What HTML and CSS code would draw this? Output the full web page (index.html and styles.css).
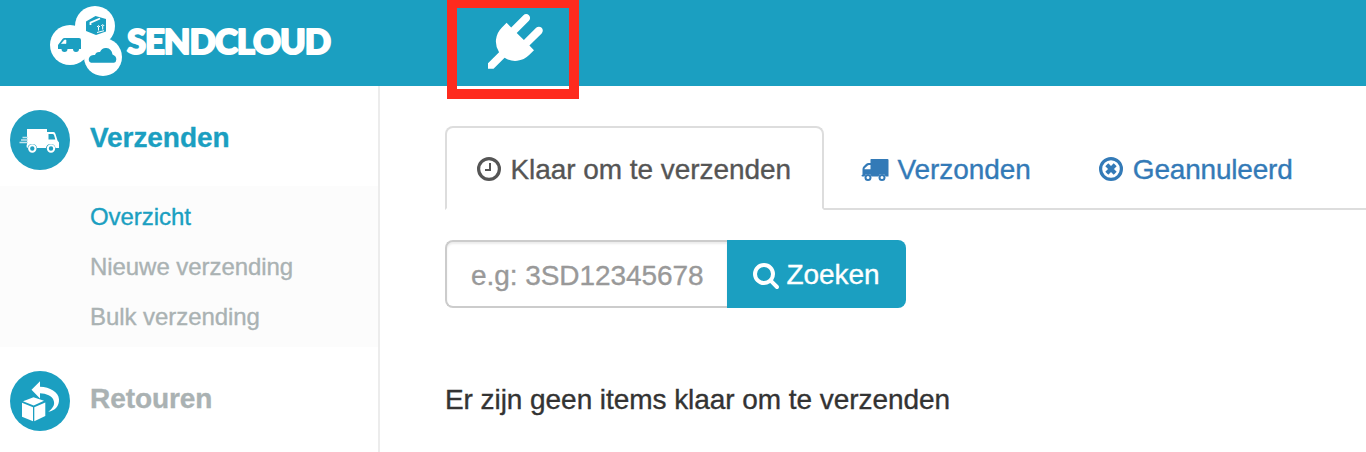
FILE: index.html
```html
<!DOCTYPE html>
<html lang="nl">
<head>
<meta charset="utf-8">
<title>SendCloud</title>
<link rel="stylesheet" href="styles.css">
</head>
<body>
<header class="topbar">
  <svg class="logo" width="300" height="86" viewBox="40 0 300 86">
    <g fill="#fff">
      <circle cx="70" cy="45" r="20"/>
      <circle cx="95" cy="26" r="20"/>
      <circle cx="103" cy="57" r="19"/>
    </g>
    <g class="logo-art">
      <path d="M86 21.500l9.500-5.500 10.500 3v12.500l-10 3.500-10-4z"/>
      <path d="M58 49v-4l4.500-6q.8-1 2-1H79q2 0 2 2v9h-2a3 3 0 0 1-6 0h-5.500a3 3 0 0 1-6 0z"/>
      <path d="M91 62.800q-3-1.300-2-4.800 1.500-3.500 6-3 1-3.500 5-3 2-4.500 6.500-4 5 .5 6 6.500 4 1.500 3.800 5 0 2.500-2.300 3.300z"/>
    </g>
    <path d="M90.500 25v-2.300l9.500-4.200" fill="none" stroke="#fff" stroke-width="1.800"/>
    <path d="M98.500 26.500v4m4.200-5v4m-5.700-2.500 1.500-1.500 1.500 1.500m1.200-1 1.500-1.500 1.500 1.500M97 32.500l7-1.800" fill="none" stroke="#fff" stroke-width="1"/>
    <path d="M61.500 43.500l3-3.500h1.500v3.500z" fill="#fff" stroke="#fff" stroke-width=".6"/>
    <text class="wordmark" x="127" y="53.500" textLength="203" lengthAdjust="spacingAndGlyphs">SENDCLOUD</text>
  </svg>
  <div class="highlight">
    <svg class="plug" viewBox="0 0 1792 1792"><path fill="#fff" d="M1755 453q37 38 37 90.500t-37 90.500l-401 400 150 150-160 160q-163 163-389.500 186.500t-411.500-100.500l-362 362h-181v-181l362-362q-124-185-100.500-411.500t186.500-389.500l160-160 150 150 400-401q38-37 91-37t90 37 37 90.500-37 90.500l-400 401 234 234 401-400q38-37 91-37t90 37z"/></svg>
  </div>
</header>
<div class="layout">
  <nav class="sidebar">
    <a class="section active">
      <svg width="60" height="60" viewBox="0 0 60 60">
        <circle cx="30" cy="30" r="30" fill="#219fc0"/>
        <path fill="#fff" d="M17 19h20v3h6.500q1.500 0 2 2l2 6.500 1.500 2V38h-3.500a4.800 4.800 0 0 0-9.500 0h-9a4.800 4.800 0 0 0-9.500 0H17q-1-2 0-4z"/>
        <path fill="#219fc0" d="M38.500 24h4q1 0 1.500 1l1.300 4.500h-6.800z"/>
        <path d="M12.500 27.500H18M11 30h7M9.500 32.500H18" stroke="#c5e5ee" stroke-width="1.400"/>
        <g fill="#219fc0" stroke="#fff" stroke-width="2"><circle cx="22.300" cy="38.500" r="3.200"/><circle cx="41" cy="38.500" r="3.200"/></g>
      </svg>
      <span>Verzenden</span>
    </a>
    <ul class="submenu">
      <li class="current">Overzicht</li>
      <li>Nieuwe verzending</li>
      <li>Bulk verzending</li>
    </ul>
    <a class="section">
      <svg width="60" height="60" viewBox="0 0 60 60">
        <circle cx="30" cy="30" r="30" fill="#1b9fc1"/>
        <g fill="#fff">
          <path d="M23.500 26.300l10.500 3.500-10.300 4.700-10.700-4.200z"/>
          <path d="M12 31.800l11 4.400v14l-11-4.500zM24.300 36.200l11-4.800v13.700l-11 5.100z"/>
          <path d="M21.500 18.800L30 10.300v5.400c10 .5 18.500 5 19 12.500.3 7-4 11.500-10.700 12.500 4.500-3.500 6.700-7 5.500-10.800C42.500 25 36 22.400 30 22.300v5.200z"/>
        </g>
      </svg>
      <span>Retouren</span>
    </a>
  </nav>
  <main class="content">
    <div class="tabs">
      <a class="tab selected">
        <svg width="24" height="24" viewBox="0 0 24 24" fill="none" stroke="currentColor"><circle cx="12" cy="12" r="10.400" stroke-width="3.200"/><path d="M13 6v7H8" stroke-width="2"/></svg>
        <span>Klaar om te verzenden</span>
      </a>
      <a class="tab sent">
        <svg width="28" height="24" viewBox="0 0 28 24"><path fill="currentColor" fill-rule="evenodd" d="M10 2h16.500q1 0 1 1v16.500h-2.800a4 4 0 0 0-7.400 0h-6.600a4 4 0 0 0-7.400 0H1.500Q.5 19.500.5 18.500q0-.8 1-.8V12q0-1.500 1-2.500L5 7q1-1 2.500-1H9.500V2.500q0-.5.500-.5zM9.500 8H7.800q-.5 0-1 .5L4 11q-.5.500-.5 1v.3h6z"/><g fill="none" stroke="currentColor" stroke-width="2"><circle cx="7" cy="20.500" r="2.500"/><circle cx="21" cy="20.500" r="2.500"/></g></svg>
        <span>Verzonden</span>
      </a>
      <a class="tab cancelled">
        <svg width="24" height="24" viewBox="0 0 24 24" fill="none" stroke="currentColor"><circle cx="12" cy="12" r="10.400" stroke-width="3.200"/><path d="M7.800 7.800l8.400 8.400m0-8.400l-8.400 8.400" stroke-width="4.200"/></svg>
        <span>Geannuleerd</span>
      </a>
    </div>
    <form class="search">
      <input class="query" type="text" placeholder="e.g: 3SD12345678">
      <button class="submit" type="button">
        <svg width="28" height="28" viewBox="0 0 1792 1792"><path fill="#fff" d="M1216 832q0-185-131.500-316.500t-316.500-131.500-316.500 131.500-131.500 316.500 131.500 316.500 316.500 131.500 316.500-131.500 131.500-316.500zm512 832q0 52-38 90t-90 38q-54 0-90-38l-343-342q-179 124-399 124-143 0-273.500-55.500t-225-150-150-225-55.500-273.500 55.500-273.500 150-225 225-150 273.500-55.500 273.500 55.500 225 150 150 225 55.500 273.500q0 220-124 399l343 343q37 37 37 90z"/></svg>
        <span>Zoeken</span>
      </button>
    </form>
    <p class="empty">Er zijn geen items klaar om te verzenden</p>
  </main>
</div>
</body>
</html>
```
FILE: styles.css
```css
* { box-sizing: border-box; }
body {
  margin: 0;
  height: 452px;
  overflow: hidden;
  display: flex;
  flex-direction: column;
  background: #fff;
  color: #333;
  font: 28px/40px "Liberation Sans", Arial, sans-serif;
  letter-spacing: -.06px;
  -webkit-text-stroke: .35px currentColor;
}
.topbar {
  position: relative;
  flex: 0 0 86px;
  padding-left: 40px;
  background: #1b9fc1;
}
.logo { display: block; }
.logo-art { fill: #1b9fc1; }
.wordmark {
  font: 900 34px Lato, sans-serif;
  letter-spacing: -1px;
  fill: #fff;
  stroke: #fff;
  stroke-width: 2;
  stroke-linejoin: round;
  -webkit-text-stroke: 2px #fff;
}
.highlight {
  position: absolute;
  left: 447px;
  top: 0;
  width: 132px;
  height: 99px;
  border: 10px solid #fe2b1e;
  border-top-width: 8px;
  padding: 6.3px 0 0 31.2px;
}
.plug { display: block; width: 54.8px; height: 54.8px; }
.layout { flex: 1; display: flex; }
.sidebar {
  flex: 0 0 380px;
  border-right: 2px solid #ececec;
}
.section {
  display: flex;
  gap: 20px;
  height: 100px;
  padding: 24px 0 0 10px;
  color: #aab2b3;
  font-weight: bold;
}
.section span { margin-top: 8px; }
.section.active { color: #1b9fc1; }
.submenu {
  margin: 0;
  height: 161px;
  padding: 6px 0 0 90px;
  list-style: none;
  background: #fcfcfc;
  color: #aab2b3;
  font-size: 24px;
  line-height: 50px;
}
.submenu .current { color: #1b9fc1; }
.content { flex: 1; padding: 40px 0 0 65px; }
.tabs {
  display: flex;
  height: 84px;
  border-bottom: 2px solid #ddd;
}
.tab {
  display: flex;
  align-items: center;
  gap: 10px;
  height: 84px;
  color: #337ab7;
  padding: 0 0 0 36.5px;
  white-space: nowrap;
}
.tab span { margin-top: 3px; }
.tab svg { margin-top: 2px; flex: none; }
.tab.selected {
  width: 379px;
  padding-left: 29.5px;
  border: 2px solid #ddd;
  border-bottom-color: #fff;
  border-radius: 8px 8px 0 0;
  color: #555;
}
.tab.sent { gap: 9px; }
.tab.cancelled { padding-left: 68px; letter-spacing: -.2px; }
.search { display: flex; margin: 30px 0 0; height: 68px; }
.query {
  width: 282px;
  padding: 3px 0 0 24px;
  border: 2px solid #ccc;
  border-right: 0;
  border-radius: 8px 0 0 8px;
  box-shadow: inset 0 2px 2px rgba(0, 0, 0, .075);
  font: inherit;
  letter-spacing: inherit;
}
.query::placeholder { color: #999; opacity: 1; }
.submit {
  display: flex;
  align-items: center;
  gap: 6.5px;
  width: 179px;
  padding: 2px 0 0 25px;
  border: 0;
  border-radius: 0 8px 8px 0;
  background: #1b9fc1;
  color: #fff;
  font: inherit;
  letter-spacing: inherit;
}
.empty { margin: 72px 0 0; }
```
